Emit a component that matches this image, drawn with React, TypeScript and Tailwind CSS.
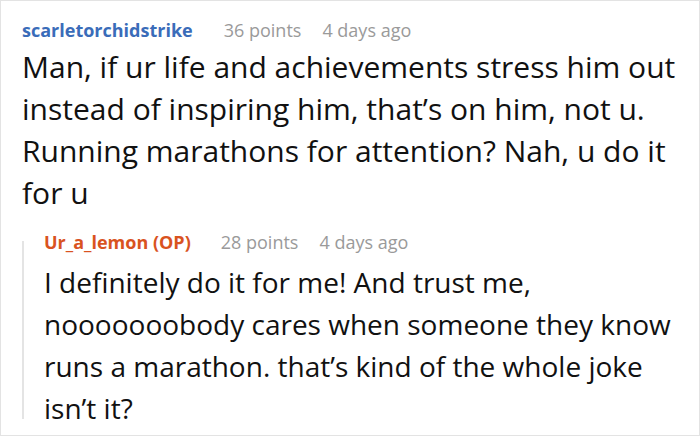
const font = { fontFamily: '"Open Sans", "Noto Sans", sans-serif' };

interface MetaProps {
  author: string;
  points: number;
  age: string;
  op?: boolean;
}

function Meta({ author, points, age, op }: MetaProps) {
  return (
    <div className="flex items-baseline text-[18px] leading-[24px]">
      <span
        className={
          op
            ? "font-bold text-[#d9531f] mr-[30px]"
            : "font-bold text-[#3a6cb9] mr-[31px]"
        }
      >
        {author}
      </span>
      <span className="text-[#9a9a9a] mr-[21px]">{points} points</span>
      <span className="text-[#9a9a9a]">{age}</span>
    </div>
  );
}

export default function App() {
  return (
    <div
      className="w-[700px] h-[436px] bg-white border border-[#e3e3e3] overflow-hidden"
      style={font}
    >
      <div className="pl-[21px] pt-[17px]">
        <Meta author="scarletorchidstrike" points={36} age="4 days ago" />
        <p className="mt-[4px] w-[660px] text-[30px] leading-[42px] text-[#111]">
          Man, if ur life and achievements stress him out instead of inspiring
          him, that’s on him, not u. Running marathons for attention? Nah, u do
          it for u
        </p>
        <div className="flex mt-[16px]">
          <div className="w-[2px] mt-[11px] mb-[10px] bg-[#e4e4e4]" />
          <div className="pl-[20px]">
            <Meta author="Ur_a_lemon (OP)" points={28} age="4 days ago" op />
            <p className="mt-[7px] w-[634px] text-[28px] leading-[42px] text-[#111]">
              I definitely do it for me! And trust me, nooooooobody cares when
              someone they know runs a marathon. that’s kind of the whole joke
              isn’t it?
            </p>
          </div>
        </div>
      </div>
    </div>
  );
}
